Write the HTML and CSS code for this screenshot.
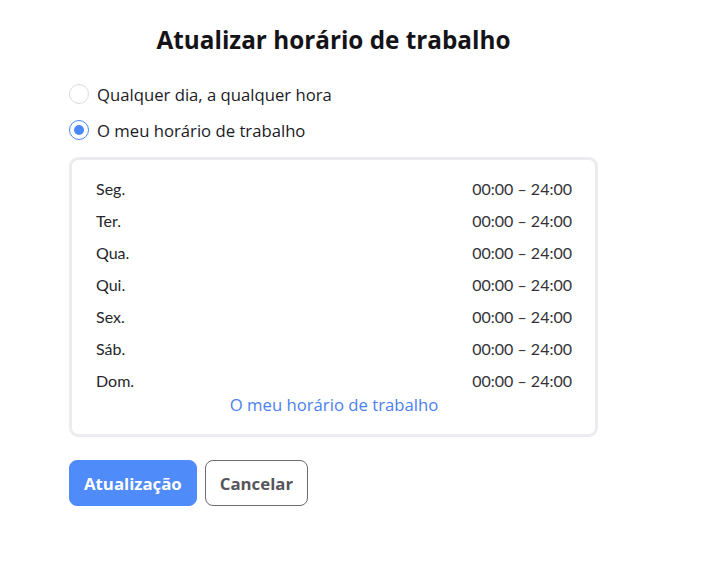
FILE: index.html
```html
<!DOCTYPE html>
<html lang="pt">
<head>
    <meta charset="UTF-8">
    <title>Atualizar horário de trabalho</title>
    <link rel="stylesheet" href="styles.css">
</head>
<body>
<div class="dialog">
    <h2 class="title">Atualizar horário de trabalho</h2>

    <label class="option">
        <span class="radio"></span>
        <span>Qualquer dia, a qualquer hora</span>
    </label>
    <label class="option">
        <span class="radio checked"></span>
        <span>O meu horário de trabalho</span>
    </label>

    <div class="schedule">
        <div class="row"><span>Seg.</span><span class="time">00:00 – 24:00</span></div>
        <div class="row"><span>Ter.</span><span class="time">00:00 – 24:00</span></div>
        <div class="row"><span>Qua.</span><span class="time">00:00 – 24:00</span></div>
        <div class="row"><span>Qui.</span><span class="time">00:00 – 24:00</span></div>
        <div class="row"><span>Sex.</span><span class="time">00:00 – 24:00</span></div>
        <div class="row"><span>Sáb.</span><span class="time">00:00 – 24:00</span></div>
        <div class="row"><span>Dom.</span><span class="time">00:00 – 24:00</span></div>
        <a class="edit-link" href="#">O meu horário de trabalho</a>
    </div>

    <div class="actions">
        <button class="btn primary">Atualização</button>
        <button class="btn">Cancelar</button>
    </div>
</div>
</body>
</html>
```

FILE: styles.css
```css
body {
    margin: 0;
    font-family: "Open Sans", Lato, sans-serif;
    color: #1b1b1f;
    background: #fff;
}
.dialog {
    width: 529px;
    margin-left: 69px;
    padding-top: 25px;
}
.title {
    margin: 0 0 21px;
    text-align: center;
    font-size: 24.3px;
    font-weight: 700;
    line-height: 30px;
    color: #141418;
}
.option {
    display: flex;
    align-items: center;
    gap: 8px;
    height: 36px;
    font-size: 16.7px;
    cursor: pointer;
}
.radio {
    width: 18px;
    height: 18px;
    border: 1px solid #dcdcdf;
    border-radius: 50%;
    box-sizing: content-box;
    position: relative;
}
.radio.checked {
    border-color: #4b87f7;
}
.radio.checked::after {
    content: "";
    position: absolute;
    top: 4px;
    left: 4px;
    width: 10px;
    height: 10px;
    border-radius: 50%;
    background: #4b87f7;
}
.schedule {
    margin-top: 9px;
    border: 3px solid #ececf0;
    border-radius: 9px;
    padding: 13px 23px 17px 24px;
    display: flex;
    flex-direction: column;
}
.row {
    display: flex;
    justify-content: space-between;
    height: 32px;
    line-height: 32px;
    font-family: Lato, sans-serif;
    font-size: 16px;
    color: #26262b;
}
.time {
    color: #333338;
}
.edit-link {
    align-self: center;
    margin-top: -4px;
    font-size: 16.7px;
    line-height: 24px;
    color: #4b7ff0;
    text-decoration: none;
}
.actions {
    display: flex;
    gap: 8px;
    margin-top: 23px;
}
.btn {
    height: 46px;
    padding: 0 14px;
    border: 1px solid #6b6b70;
    border-radius: 8px;
    background: #fff;
    font-family: inherit;
    font-size: 16.8px;
    font-weight: 700;
    color: #55555b;
}
.btn.primary {
    border-color: #4f8bf9;
    background: #4f8bf9;
    color: #fff;
}
```
